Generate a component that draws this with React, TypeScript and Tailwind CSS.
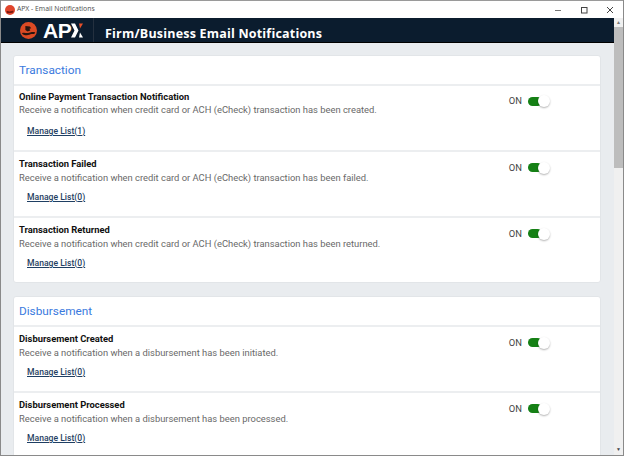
import React from "react";

const font = { fontFamily: "Roboto, sans-serif" };

function Toggle() {
  return (
    <div className="relative h-[9px] w-[22px] shrink-0">
      <div className="h-[9px] w-[14px] rounded-full bg-[#158015]" />
      <div className="absolute left-[10px] top-[-1.5px] h-[12px] w-[12px] rounded-full bg-white shadow-[0_1px_2px_rgba(0,0,0,0.3)]" />
    </div>
  );
}

function Row({ title, desc, count, first }: { title: string; desc: string; count: number; first?: boolean }) {
  return (
    <div className={`flex h-[66px] shrink-0 border-t-2 border-[#eceef0] pl-[5px] pr-[50px] ${first ? "pt-[4px]" : "pt-[5px]"}`}>
      <div className="flex-1">
        <div className="text-[9.4px] font-bold leading-[14px] text-[#111]">{title}</div>
        <div className={`text-[9.4px] leading-[14px] text-[#696969] ${first ? "mt-[-1px]" : ""}`}>{desc}</div>
        <a className={`ml-[8px] block w-fit text-[8.6px] font-medium leading-[12px] text-[#1f3f63] underline ${first ? "mt-[8px]" : "mt-[6px]"}`}>
          Manage List({count})
        </a>
      </div>
      <div className={`flex h-[14px] items-center gap-[6px] ${first ? "pt-[8px]" : "pt-[7px]"}`}>
        <span className="text-[9.4px] leading-[14px] text-[#444]">ON</span>
        <Toggle />
      </div>
    </div>
  );
}

function Card({ title, children, last }: { title: string; children: React.ReactNode; last?: boolean }) {
  return (
    <section className={`rounded-[3px] border border-[#e2e5e8] bg-white ${last ? "mb-0" : "mb-[13px]"}`}>
      <h2 className="flex h-[28px] items-center pl-[5px] pt-[2px] text-[11.8px] font-normal text-[#3a7ade]">{title}</h2>
      {children}
    </section>
  );
}

function Logo() {
  return (
    <div className="flex h-full w-[93px] shrink-0 items-center border-r border-[#24303f] pl-[18px]">
      <svg width="19" height="17" viewBox="0 0 19 19">
        <circle cx="9.5" cy="9.5" r="9.500" fill="#dc4a24" />
        <path d="M2 12.500c3-1.500 5 .5 8-.5s4-1 7-.5l-1 2c-3-.5-4 0-7 1s-4 0-5.500-.5z" fill="#2a1510" />
        <path d="M6 9V4.500l5 .5 1.500 2-2 .5 1 2-3 1z" fill="#2a1510" />
      </svg>
      <span className="ml-[5px] text-[21px] font-bold leading-none tracking-[-0.3px] text-white" style={{ fontFamily: "'Liberation Sans', sans-serif" }}>
        AP
      </span>
      <svg width="12" height="15" viewBox="0 0 12 14" className="ml-[-1px]">
        <path d="M0 0h4l3.500 7L4 14H0l3.500-7z" fill="#fff" />
        <path d="M8 0h4L9 5z" fill="#e8502a" />
        <path d="M9 9l3 5H8z" fill="#fff" />
      </svg>
    </div>
  );
}

export default function App() {
  return (
    <div className="flex h-[456px] w-[624px] flex-col overflow-hidden border-x border-b border-[#8a8a8a] bg-white" style={font}>
      <div className="flex h-[18px] shrink-0 items-center border-t border-[#9a9a9a] bg-white pl-[4px]">
        <svg width="10" height="10" viewBox="0 0 11 11">
          <circle cx="5.5" cy="5.500" r="5.500" fill="#e0452c" />
          <path d="M1.500 7c2-1 3 .5 4.500 0s2-1 3.500-.5l-1 2-6 .5z" fill="#7a1a10" />
        </svg>
        <span className="ml-[2px] text-[6.800px] text-[#555]" style={{ fontFamily: "'Noto Sans', sans-serif" }}>APX - Email Notifications</span>
        <div className="ml-auto flex items-center gap-[18px] pr-[9px]">
          <svg width="8" height="10" viewBox="0 0 8 10"><path d="M1 5.500h6" stroke="#777" strokeWidth="1" /></svg>
          <svg width="8" height="10" viewBox="0 0 8 10"><rect x="1.500" y="2.500" width="5.500" height="5.500" fill="none" stroke="#444" strokeWidth="1" /></svg>
          <svg width="8" height="10" viewBox="0 0 8 10"><path d="M1 2l6 6M7 2l-6 6" stroke="#444" strokeWidth="1" /></svg>
        </div>
      </div>
      <div className="flex min-h-0 flex-1">
        <div className="flex min-w-0 flex-1 flex-col overflow-hidden bg-[#e9ecef]">
          <header className="flex h-[25px] shrink-0 items-center border-b border-black bg-[#0b1c2e]">
            <Logo />
            <h1 className="ml-[11px] pt-[9px] text-[12.5px] font-bold tracking-[0.2px] text-white" style={{ fontFamily: "'Open Sans', sans-serif" }}>
              Firm/Business Email Notifications
            </h1>
          </header>
          <main className="pl-[12px] pr-[13px] pt-[12px]">
            <Card title="Transaction">
              <Row first title="Online Payment Transaction Notification" desc="Receive a notification when credit card or ACH (eCheck) transaction has been created." count={1} />
              <Row title="Transaction Failed" desc="Receive a notification when credit card or ACH (eCheck) transaction has been failed." count={0} />
              <Row title="Transaction Returned" desc="Receive a notification when credit card or ACH (eCheck) transaction has been returned." count={0} />
            </Card>
            <Card title="Disbursement" last>
              <Row title="Disbursement Created" desc="Receive a notification when a disbursement has been initiated." count={0} />
              <Row title="Disbursement Processed" desc="Receive a notification when a disbursement has been processed." count={0} />
            </Card>
          </main>
        </div>
        <div className="flex w-[9px] shrink-0 flex-col bg-[#f0f0f0]">
          <div className="flex h-[9px] items-center justify-center text-[5px] leading-none text-[#777]">▲</div>
          <div className="h-[141px] bg-[#bdbdbd]" />
          <div className="mt-auto flex h-[12px] items-center justify-center text-[5px] leading-none text-[#444]">▼</div>
        </div>
      </div>
    </div>
  );
}
